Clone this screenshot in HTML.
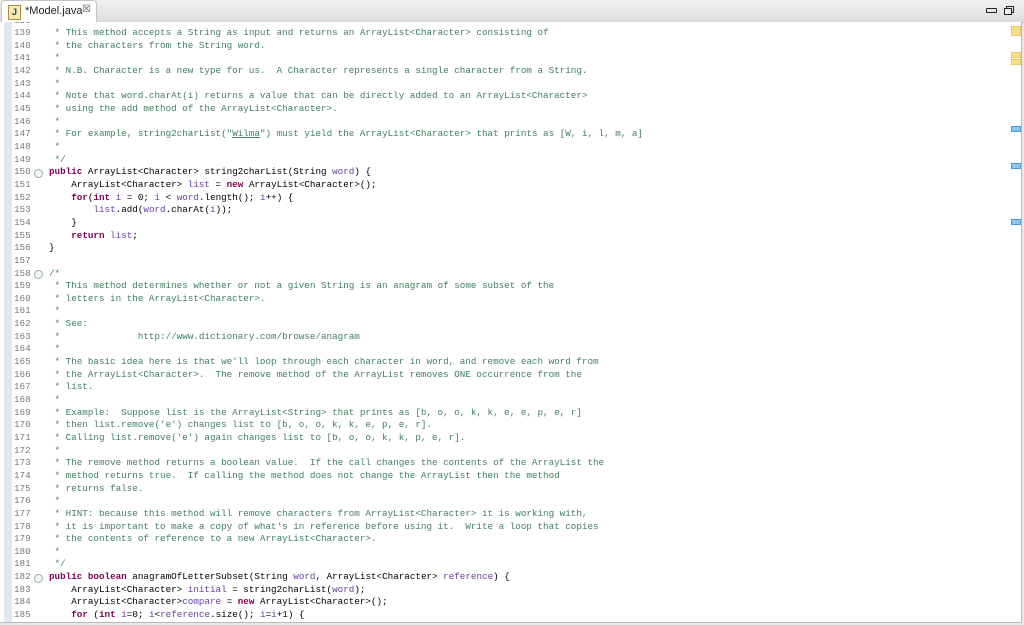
<!DOCTYPE html>
<html><head><meta charset="utf-8"><style>
body{margin:0;width:1024px;height:625px;background:#e8e8e8;overflow:hidden;font-family:"Liberation Sans",sans-serif;position:relative}
.tabbar{position:absolute;left:0;top:0;width:1024px;height:22px;background:linear-gradient(#f0f0f0,#dcdcdc);border-bottom:1px solid #c8c8c8}
.tab{position:absolute;left:1px;top:0;width:94px;height:23px;background:#fff;border:1px solid #c4c4c4;border-bottom:none;border-radius:4px 4px 0 0;font-size:11px;color:#222}
.editor{position:absolute;left:0;top:22px;width:1021px;height:600px;background:#fff;border-right:1px solid #bbb;border-bottom:1px solid #bbb;overflow:hidden}
.strip{position:absolute;left:4px;top:0;width:8px;height:600px;background:#dfe7f3}
.code{position:absolute;left:0;top:2px;font-family:"Liberation Mono",monospace;font-size:9.25px;line-height:12.65px;white-space:pre}
.ln{position:absolute;left:14px;width:30px;color:#787878}
.tx{position:absolute;left:49px}
.c{color:#3f7f5f}.k{color:#7f0055;font-weight:bold}.v{color:#6a3e9e}.n{color:#000}
.fold{position:absolute;left:34px;width:7px;height:7px;border:1px solid #9aa;border-radius:50%;background:#f4f4f4}
.mk{position:absolute;left:1011px;width:8px;height:4px}
</style></head><body>
<div class="tabbar">
<div class="tab"><span style="position:absolute;left:6px;top:4px;width:11px;height:13px;border:1px solid #b08a3a;background:#f7e7b7;font-size:9px;line-height:13px;text-align:center;color:#345;font-weight:bold">J</span><span style="position:absolute;left:23px;top:4px">*Model.java</span><span style="position:absolute;left:80px;top:3px;font-size:10px;color:#555">☒</span></div>
<div style="position:absolute;left:986px;top:8px;width:9px;height:3px;border:1px solid #222;border-radius:1px"></div>
<div style="position:absolute;left:1006px;top:6px;width:6px;height:5px;border:1px solid #222"></div>
<div style="position:absolute;left:1004px;top:8px;width:6px;height:5px;border:1px solid #222;background:#eee"></div>
</div>
<div class="editor">
<div class="strip"></div>
<div class="code" id="code"></div>
<div class="mk" style="top:4px;height:8px;background:#f7e08a;border:1px solid #e8c860"></div>
<div class="mk" style="top:30px;background:#f7e08a;border:1px solid #e8c860"></div>
<div class="mk" style="top:37px;background:#f7e08a;border:1px solid #e8c860"></div>
<div class="mk" style="top:104px;background:#8cc4f4;border:1px solid #4a9ae0"></div>
<div class="mk" style="top:141px;background:#8cc4f4;border:1px solid #4a9ae0"></div>
<div class="mk" style="top:197px;background:#8cc4f4;border:1px solid #4a9ae0"></div>
</div>
<script>
const L=[
[138,'<span class="c"> *</span>'],
[139,'<span class="c"> * This method accepts a String as input and returns an ArrayList&lt;Character&gt; consisting of</span>'],
[140,'<span class="c"> * the characters from the String word.</span>'],
[141,'<span class="c"> *</span>'],
[142,'<span class="c"> * N.B. Character is a new type for us.  A Character represents a single character from a String.</span>'],
[143,'<span class="c"> *</span>'],
[144,'<span class="c"> * Note that word.charAt(i) returns a value that can be directly added to an ArrayList&lt;Character&gt;</span>'],
[145,'<span class="c"> * using the add method of the ArrayList&lt;Character&gt;.</span>'],
[146,'<span class="c"> *</span>'],
[147,'<span class="c"> * For example, string2charList("<u>Wilma</u>") must yield the ArrayList&lt;Character&gt; that prints as [W, i, l, m, a]</span>'],
[148,'<span class="c"> *</span>'],
[149,'<span class="c"> */</span>'],
[150,'<span class="k">public</span> ArrayList&lt;Character&gt; string2charList(String <span class="v">word</span>) {',1],
[151,'    ArrayList&lt;Character&gt; <span class="v">list</span> = <span class="k">new</span> ArrayList&lt;Character&gt;();'],
[152,'    <span class="k">for</span>(<span class="k">int</span> <span class="v">i</span> = 0; <span class="v">i</span> &lt; <span class="v">word</span>.length(); <span class="v">i</span>++) {'],
[153,'        <span class="v">list</span>.add(<span class="v">word</span>.charAt(<span class="v">i</span>));'],
[154,'    }'],
[155,'    <span class="k">return</span> <span class="v">list</span>;'],
[156,'}'],
[157,''],
[158,'<span class="c">/*</span>',1],
[159,'<span class="c"> * This method determines whether or not a given String is an anagram of some subset of the</span>'],
[160,'<span class="c"> * letters in the ArrayList&lt;Character&gt;.</span>'],
[161,'<span class="c"> *</span>'],
[162,'<span class="c"> * See:</span>'],
[163,'<span class="c"> *              http://www.dictionary.com/browse/anagram</span>'],
[164,'<span class="c"> *</span>'],
[165,'<span class="c"> * The basic idea here is that we\'ll loop through each character in word, and remove each word from</span>'],
[166,'<span class="c"> * the ArrayList&lt;Character&gt;.  The remove method of the ArrayList removes ONE occurrence from the</span>'],
[167,'<span class="c"> * list.</span>'],
[168,'<span class="c"> *</span>'],
[169,'<span class="c"> * Example:  Suppose list is the ArrayList&lt;String&gt; that prints as [b, o, o, k, k, e, e, p, e, r]</span>'],
[170,'<span class="c"> * then list.remove(\'e\') changes list to [b, o, o, k, k, e, p, e, r].</span>'],
[171,'<span class="c"> * Calling list.remove(\'e\') again changes list to [b, o, o, k, k, p, e, r].</span>'],
[172,'<span class="c"> *</span>'],
[173,'<span class="c"> * The remove method returns a boolean value.  If the call changes the contents of the ArrayList the</span>'],
[174,'<span class="c"> * method returns true.  If calling the method does not change the ArrayList then the method</span>'],
[175,'<span class="c"> * returns false.</span>'],
[176,'<span class="c"> *</span>'],
[177,'<span class="c"> * HINT: because this method will remove characters from ArrayList&lt;Character&gt; it is working with,</span>'],
[178,'<span class="c"> * it is important to make a copy of what\'s in reference before using it.  Write a loop that copies</span>'],
[179,'<span class="c"> * the contents of reference to a new ArrayList&lt;Character&gt;.</span>'],
[180,'<span class="c"> *</span>'],
[181,'<span class="c"> */</span>'],
[182,'<span class="k">public</span> <span class="k">boolean</span> anagramOfLetterSubset(String <span class="v">word</span>, ArrayList&lt;Character&gt; <span class="v">reference</span>) {',1],
[183,'    ArrayList&lt;Character&gt; <span class="v">initial</span> = string2charList(<span class="v">word</span>);'],
[184,'    ArrayList&lt;Character&gt;<span class="v">compare</span> = <span class="k">new</span> ArrayList&lt;Character&gt;();'],
[185,'    <span class="k">for</span> (<span class="k">int</span> <span class="v">i</span>=0; <span class="v">i</span>&lt;<span class="v">reference</span>.size(); <span class="v">i</span>=<span class="v">i</span>+1) {'],
[186,'']];
let h='';const lh=12.65,t0=-9.5;
L.forEach((l,j)=>{const y=(t0+j*lh).toFixed(2);
h+=`<div class="ln" style="top:${y}px">${l[0]}</div><div class="tx" style="top:${y}px">${l[1]}</div>`;
if(l[2])h+=`<div class="fold" style="top:${(+y+2.5).toFixed(2)}px"></div>`;});
document.getElementById('code').innerHTML=h;
</script>
</body></html>
